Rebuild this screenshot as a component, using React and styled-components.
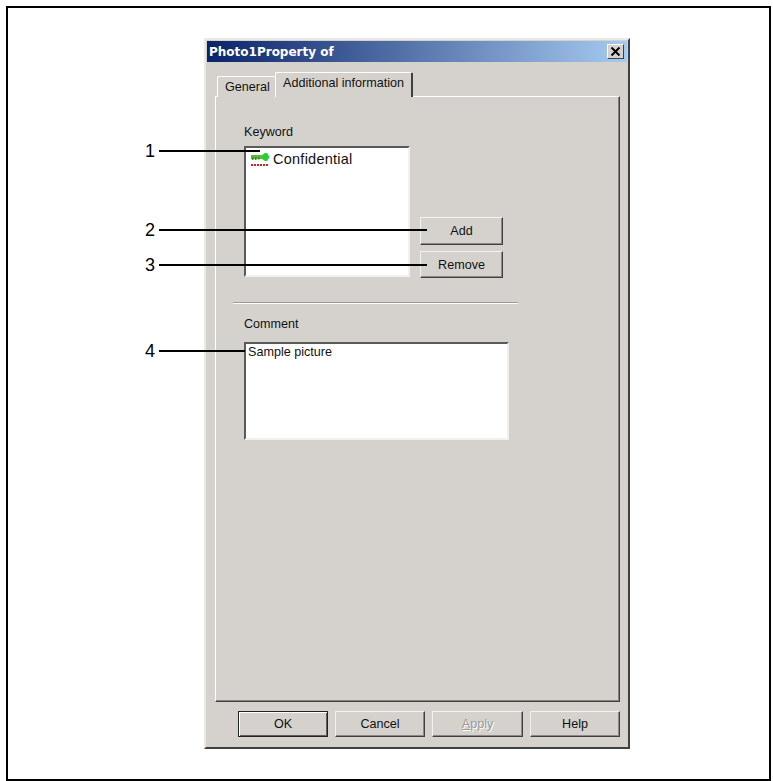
import React from "react";
import styled, { createGlobalStyle } from "styled-components";

const GlobalStyle = createGlobalStyle`
  html, body {
    margin: 0;
    padding: 0;
    background: #fff;
  }
  body {
    font-family: "Liberation Sans", Arial, sans-serif;
    font-size: 12.6px;
    color: #111;
  }
`;

const Frame = styled.div`
  position: relative;
  box-sizing: border-box;
  width: 765px;
  height: 775px;
  margin: 6px 0 0 6px;
  padding: 30px 0 0 196px;
  border: 2px solid #000;
`;

const Dialog = styled.div`
  box-sizing: border-box;
  width: 426px;
  height: 711px;
  padding: 1px;
  background: #d5d2cd;
  border: 2px solid;
  border-color: #ece9e4 #404040 #404040 #ece9e4;
`;

const TitleBar = styled.div`
  display: flex;
  align-items: center;
  justify-content: space-between;
  height: 21px;
  padding: 0 3px 0 2px;
  background: linear-gradient(90deg, #0a246a, #a6caf0);
`;

const Title = styled.span`
  font-family: "DejaVu Sans", sans-serif;
  font-size: 12px;
  font-weight: 700;
  color: #fff;
`;

const CloseButton = styled.button`
  display: flex;
  align-items: center;
  justify-content: center;
  box-sizing: border-box;
  width: 17px;
  height: 15px;
  padding: 0;
  background: #d5d2cd;
  border: 1px solid;
  border-color: #fff #404040 #404040 #fff;
`;

const TabStrip = styled.div`
  position: relative;
  z-index: 1;
  display: flex;
  align-items: flex-end;
  height: 25px;
  margin: 10px 0 -1px 10px;
`;

const Tab = styled.div`
  box-sizing: border-box;
  height: ${(p) => (p.$active ? "25px" : "21px")};
  padding: 3px 0 0 7px;
  width: ${(p) => (p.$active ? "138px" : "58px")};
  white-space: nowrap;
  background: #d5d2cd;
  border-top: 1px solid #fff;
  border-left: 1px solid #fff;
  border-right: ${(p) => (p.$active ? "2px solid #404040" : "none")};
  border-radius: 2px 2px 0 0;
`;

const Panel = styled.div`
  box-sizing: border-box;
  width: 405px;
  height: 606px;
  margin-left: 8px;
  padding: 27px 0 0 28px;
  border: 1px solid;
  border-color: #fff #404040 #404040 #fff;
  box-shadow: inset -1px -1px 0 #808080;
`;

const FieldLabel = styled.div`
  height: 15px;
  line-height: 17px;
`;

const KeywordRow = styled.div`
  display: flex;
  gap: 10px;
  height: 132px;
  margin-top: 7px;
`;

const InsetBox = styled.div`
  box-sizing: border-box;
  width: ${(p) => p.$width}px;
  height: ${(p) => p.$height}px;
  background: #fff;
  border: 2px solid;
  border-color: #5a5a5a #f2f0ec #f2f0ec #5a5a5a;
`;

const KeywordItem = styled.div`
  display: flex;
  align-items: flex-start;
  gap: 4px;
  padding: 3px 0 0 5px;
  font-size: 14.5px;
  line-height: 17px;
  letter-spacing: 0.25px;
`;

const SideButtons = styled.div`
  display: flex;
  flex-direction: column;
  justify-content: flex-end;
  gap: 6px;
`;

const Button = styled.button`
  box-sizing: border-box;
  width: ${(p) => p.$width}px;
  height: ${(p) => p.$height || 26}px;
  padding: 0;
  font: inherit;
  color: ${(p) => (p.disabled ? "#9a9a9a" : "#111")};
  text-shadow: ${(p) => (p.disabled ? "1px 1px 0 #fff" : "none")};
  background: #d5d2cd;
  border: 1px solid;
  border-color: ${(p) =>
    p.$primary ? "#222" : "#f4f2ee #404040 #404040 #f4f2ee"};
  box-shadow: ${(p) =>
    p.$primary
      ? "inset 1px 1px 0 #fff, inset -1px -1px 0 #606060"
      : "inset -1px -1px 0 #8a8a8a"};
`;

const Separator = styled.div`
  width: 285px;
  height: 1px;
  margin: 24px 0 12px -11px;
  background: #9c9a94;
  border-bottom: 1px solid #fff;
`;

const CommentBox = styled(InsetBox)`
  margin-top: 11px;
  padding: 1px 0 0 2px;
  line-height: 15px;
`;

const Footer = styled.div`
  display: flex;
  justify-content: flex-end;
  gap: 7px;
  margin-top: 9px;
  padding-right: 7px;
`;

const Leader = styled.div`
  position: absolute;
  left: 137px;
  top: ${(p) => p.$y - 18}px;
  display: flex;
  align-items: center;
  gap: 4px;
  height: 20px;
`;

const LeaderNumber = styled.span`
  font-size: 18px;
  line-height: 20px;
  color: #000;
`;

const LeaderLine = styled.span`
  display: block;
  width: ${(p) => p.$width}px;
  height: 2px;
  background: #000;
`;

const leaders = [
  { n: "1", y: 151, width: 101 },
  { n: "2", y: 230, width: 268 },
  { n: "3", y: 265, width: 268 },
  { n: "4", y: 351, width: 86 },
];

function KeyIcon() {
  return (
    <svg width="18" height="15" viewBox="0 0 18 15" aria-hidden="true">
      <path d="M11 4 14 2h2l2 3v2l-2 3h-2l-3-2z" fill="#22d03a" />
      <rect x="0" y="4" width="12" height="4" fill="#5dbb3c" />
      <path d="M1 6h1.5v3H1zM4 6h1.5v3H4zM7 6h1.5v2.5H7z" fill="#3a8a30" />
      <path
        d="M0 13h2v2H0zM3 13h2v2H3zM6 13h2v2H6zM9 13h2v2H9zM12 13h2v2h-2zM15 13h2v2h-2z"
        fill="#d0202a"
      />
    </svg>
  );
}

function CloseGlyph() {
  return (
    <svg width="11" height="9" viewBox="0 0 11 9" aria-hidden="true">
      <path d="M1.5 0.5 9.5 8.5M9.5 0.5 1.5 8.5" stroke="#000" strokeWidth="2" fill="none" />
    </svg>
  );
}

export default function App() {
  return (
    <>
      <GlobalStyle />
      <Frame>
        <Dialog>
          <TitleBar>
            <Title>Photo1Property of</Title>
            <CloseButton aria-label="Close">
              <CloseGlyph />
            </CloseButton>
          </TitleBar>
          <TabStrip>
            <Tab>General</Tab>
            <Tab $active>Additional information</Tab>
          </TabStrip>
          <Panel>
            <FieldLabel>Keyword</FieldLabel>
            <KeywordRow>
              <InsetBox $width={166} $height={131}>
                <KeywordItem>
                  <KeyIcon />
                  Confidential
                </KeywordItem>
              </InsetBox>
              <SideButtons>
                <Button $width={83} $height={28}>Add</Button>
                <Button $width={83} $height={27}>Remove</Button>
              </SideButtons>
            </KeywordRow>
            <Separator />
            <FieldLabel>Comment</FieldLabel>
            <CommentBox $width={265} $height={98}>Sample picture</CommentBox>
          </Panel>
          <Footer>
            <Button $width={90} $primary>OK</Button>
            <Button $width={90}>Cancel</Button>
            <Button $width={91} disabled><u>A</u>pply</Button>
            <Button $width={90}>Help</Button>
          </Footer>
        </Dialog>
        {leaders.map((l) => (
          <Leader key={l.n} $y={l.y}>
            <LeaderNumber>{l.n}</LeaderNumber>
            <LeaderLine $width={l.width} />
          </Leader>
        ))}
      </Frame>
    </>
  );
}
